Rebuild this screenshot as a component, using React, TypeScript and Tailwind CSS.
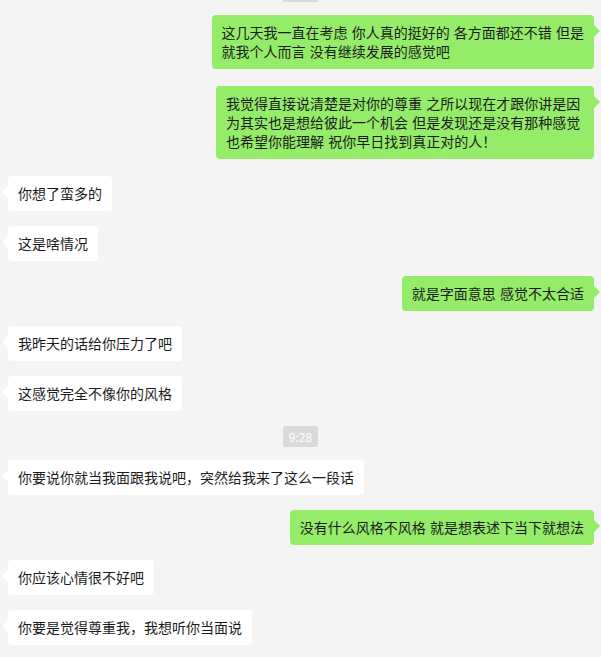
import React from "react";

type Msg =
  | { side: "l" | "r"; lines: string[]; mt: string; w?: string }
  | { side: "t"; text: string; mt: string };

const font = { fontFamily: '"Noto Sans CJK SC", "Microsoft YaHei", sans-serif' };

function Bubble({ side, lines, mt, w }: { side: "l" | "r"; lines: string[]; mt: string; w?: string }) {
  const isR = side === "r";
  return (
    <div className={`flex ${isR ? "justify-end pr-[7px]" : "justify-start pl-[8px]"} ${mt}`}>
      <div
        className={`relative rounded-[4px] px-[10px] py-[8px] text-[14px] leading-[19px] text-[#1b1b1b] whitespace-nowrap [word-spacing:1px] ${
          isR ? "bg-[#95ec69]" : "bg-white"
        } ${w ?? ""}`}
      >
        {lines.map((l, i) => (
          <div key={i}>{l}</div>
        ))}
        {isR ? (
          <span className="absolute right-[-6px] top-[10px] w-0 h-0 border-y-[6px] border-y-transparent border-l-[6px] border-l-[#95ec69]" />
        ) : (
          <span className="absolute left-[-6px] top-[10px] w-0 h-0 border-y-[6px] border-y-transparent border-r-[6px] border-r-white" />
        )}
      </div>
    </div>
  );
}

function Time({ text, mt }: { text: string; mt: string }) {
  return (
    <div className={`flex justify-center ${mt}`}>
      <div className="bg-[#dadada] text-white text-[12px] leading-[21px] h-[21px] w-[35px] text-center rounded-[2px]">
        {text}
      </div>
    </div>
  );
}

export default function App() {
  const msgs: Msg[] = [
    { side: "r", mt: "mt-[13px]", lines: ["这几天我一直在考虑 你人真的挺好的 各方面都还不错 但是", "就我个人而言 没有继续发展的感觉吧"] },
    { side: "r", mt: "mt-[17px]", w: "w-[378px]", lines: ["我觉得直接说清楚是对你的尊重 之所以现在才跟你讲是因", "为其实也是想给彼此一个机会 但是发现还是没有那种感觉", "也希望你能理解 祝你早日找到真正对的人！"] },
    { side: "l", mt: "mt-[17px]", lines: ["你想了蛮多的"] },
    { side: "l", mt: "mt-[15px]", lines: ["这是啥情况"] },
    { side: "r", mt: "mt-[15px]", lines: ["就是字面意思 感觉不太合适"] },
    { side: "l", mt: "mt-[15px]", lines: ["我昨天的话给你压力了吧"] },
    { side: "l", mt: "mt-[15px]", lines: ["这感觉完全不像你的风格"] },
    { side: "t", mt: "mt-[15px]", text: "9:28" },
    { side: "l", mt: "mt-[13px]", lines: ["你要说你就当我面跟我说吧，突然给我来了这么一段话"] },
    { side: "r", mt: "mt-[15px]", lines: ["没有什么风格不风格 就是想表述下当下就想法"] },
    { side: "l", mt: "mt-[15px]", lines: ["你应该心情很不好吧"] },
    { side: "l", mt: "mt-[15px]", lines: ["你要是觉得尊重我，我想听你当面说"] },
  ];
  return (
    <div className="w-[601px] h-[657px] bg-[#f4f4f4] overflow-hidden" style={font}>
      <div className="flex justify-center">
        <div className="h-[2px] w-[35px] bg-[#dadada]" />
      </div>
      {msgs.map((m, i) =>
        m.side === "t" ? (
          <Time key={i} text={m.text} mt={m.mt} />
        ) : (
          <Bubble key={i} side={m.side} lines={m.lines} mt={m.mt} w={m.w} />
        )
      )}
    </div>
  );
}
